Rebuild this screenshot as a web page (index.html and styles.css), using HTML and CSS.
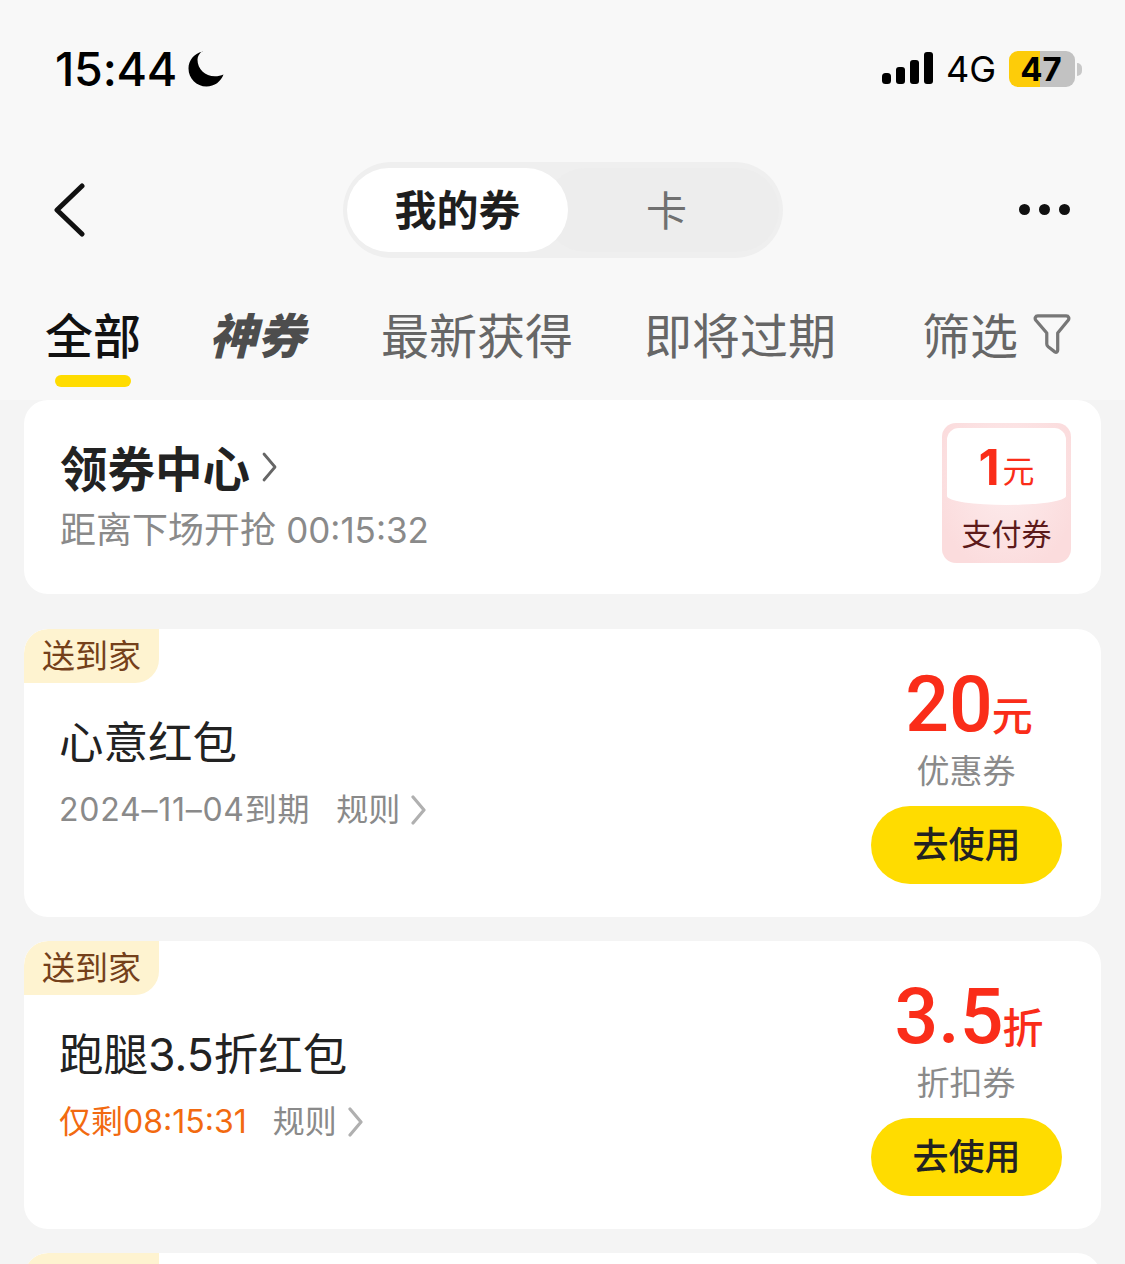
FILE: index.html
```html
<!DOCTYPE html>
<html lang="zh-CN">
<head>
<meta charset="utf-8">
<title>我的券</title>
<link rel="stylesheet" href="styles.css">
</head>
<body>
<div class="page">
  <header class="top">
    <div class="status">
      <div class="status-left">
        <span class="clock">15:44</span>
        <svg class="moon" viewBox="0 0 36 36"><path fill="#000" d="M14.500 0.500C5.800 2.500 0.500 9.500 0.500 17.500c0 10 8 18 18 18 8 0 14.500-5 17-12-2.500 1.200-5.500 1.800-8.500 1.800-10 0-17.500-7.500-17.500-16.500 0-3 1.500-6.300 5-8.800z"/></svg>
      </div>
      <div class="status-right">
        <svg class="signal" viewBox="0 0 52 32"><g fill="#000"><rect x="0" y="21" width="9" height="11" rx="3.500"/><rect x="14" y="15" width="9" height="17" rx="3"/><rect x="28" y="8" width="9" height="24" rx="3"/><rect x="42" y="0" width="9" height="32" rx="3"/></g></svg>
        <span class="net">4G</span>
        <div class="battery"><span class="battery-num">47</span></div>
        <span class="battery-cap"></span>
      </div>
    </div>
    <nav class="nav">
      <svg class="back" viewBox="0 0 32 54"><path d="M28 3 3 27l25 24" fill="none" stroke="#111" stroke-width="5" stroke-linecap="round" stroke-linejoin="round"/></svg>
      <div class="switch">
        <span class="switch-on">我的券</span>
        <span class="switch-off">卡</span>
      </div>
      <div class="more"><i></i><i></i><i></i></div>
    </nav>
    <div class="tabs">
      <div class="tab tab-all">全部<span class="underline"></span></div>
      <div class="tab tab-god">神券</div>
      <div class="tab tab-new">最新获得</div>
      <div class="tab tab-exp">即将过期</div>
      <div class="tab tab-filter">筛选
        <svg class="funnel" viewBox="0 0 40 42"><path d="M5 2h30c2.500 0 3.500 2.500 2 4.500L26 20v18c0 2-1.500 2.800-3 1.800l-7-5.300c-1-.8-1.500-1.500-1.500-3V20L3 6.500C1.500 4.500 2.500 2 5 2z" fill="none" stroke="#777" stroke-width="3.400" stroke-linejoin="round"/></svg>
      </div>
    </div>
  </header>

  <main class="list">
    <section class="center-card">
      <div class="center-text">
        <div class="center-title">领券中心
          <svg class="center-arrow" viewBox="0 0 16 30"><path d="M2 2l11 13L2 28" fill="none" stroke="#666" stroke-width="2.800" stroke-linecap="round" stroke-linejoin="round"/></svg>
        </div>
        <div class="center-sub">距离下场开抢 <span class="center-time">00:15:32</span></div>
      </div>
      <div class="pay">
        <div class="pay-top"><b>1</b><span>元</span></div>
        <div class="pay-label">支付券</div>
      </div>
    </section>

    <section class="coupon coupon-first">
      <span class="badge">送到家</span>
      <div class="coupon-left">
        <div class="coupon-name">心意红包</div>
        <div class="coupon-meta">
          <span class="meta-date">2024–11–04到期</span>
          <span class="meta-rule">规则</span>
          <svg class="rule-arrow" viewBox="0 0 16 30"><path d="M2 2l11 13L2 28" fill="none" stroke="#b0b0b0" stroke-width="3.200" stroke-linecap="round" stroke-linejoin="round"/></svg>
        </div>
      </div>
      <div class="coupon-right">
        <div class="amount"><b>20</b><span>元</span></div>
        <div class="kind">优惠券</div>
        <div class="use">去使用</div>
      </div>
    </section>

    <section class="coupon">
      <span class="badge">送到家</span>
      <div class="coupon-left">
        <div class="coupon-name">跑腿3.5折红包</div>
        <div class="coupon-meta">
          <span class="meta-left">仅剩08:15:31</span>
          <span class="meta-rule">规则</span>
          <svg class="rule-arrow" viewBox="0 0 16 30"><path d="M2 2l11 13L2 28" fill="none" stroke="#b0b0b0" stroke-width="3.200" stroke-linecap="round" stroke-linejoin="round"/></svg>
        </div>
      </div>
      <div class="coupon-right">
        <div class="amount"><b>3.5</b><span>折</span></div>
        <div class="kind">折扣券</div>
        <div class="use">去使用</div>
      </div>
    </section>

    <section class="coupon">
      <span class="badge"></span>
    </section>
  </main>
</div>
</body>
</html>
```
FILE: styles.css
```css
* { box-sizing: border-box; }
html, body { margin: 0; padding: 0; height: 1264px; overflow: hidden; }
body {
  font-family: Inter, "Noto Sans CJK SC", sans-serif;
  background: #f4f4f4;
  color: #222;
}
.page { width: 1125px; height: 1264px; overflow: hidden; }

.top { height: 400px; background: #f8f8f8; }

.status {
  height: 140px;
  padding: 43px 43px 0 55px;
  display: flex;
  justify-content: space-between;
  align-items: flex-start;
}
.status-left { display: flex; align-items: center; height: 52px; gap: 11px; }
.clock { font: 500 46.500px/52px Inter, "Liberation Sans", sans-serif; color: #000; letter-spacing: -.2px; }
.moon { width: 36px; height: 36px; }
.status-right { display: flex; align-items: center; height: 52px; }
.signal { width: 52px; height: 32px; margin-bottom: 2px; }
.net { font: 400 36px/52px Inter, "Liberation Sans", sans-serif; color: #000; margin-left: 12px; width: 52px; }
.battery {
  width: 66px; height: 36px; margin-left: 11px; border-radius: 9px;
  background: linear-gradient(90deg, #fdcc09 0 31px, #c2c2c2 31px);
  text-align: center;
}
.battery-num { font: 700 33px/36px Inter, "Liberation Sans", sans-serif; color: #000; display: block; margin-left: -2px; }
.battery-cap { width: 5px; height: 13px; background: #c8c8c8; border-radius: 0 5px 5px 0; margin-left: 2px; }

.nav {
  height: 118px;
  margin-top: 11px;
  padding: 0 55px 0 54px;
  display: flex;
  align-items: center;
}
.back { width: 32px; height: 54px; }
.switch {
  width: 440px; height: 96px; margin-left: 257px;
  background: #efefef; border-radius: 48px;
  display: flex; align-items: center; padding: 0 4px;
}
.switch-on {
  position: relative; z-index: 1;
  width: 221px; height: 84px; border-radius: 42px; background: #fff;
  font: 700 42px/80px "Noto Sans CJK SC", sans-serif; color: #1e1e1e; text-align: center;
}
.switch-off {
  width: 235px; height: 84px; margin-left: -24px; padding-left: 10px;
  border-radius: 42px; background: #ededed; text-align: center;
  font: 400 41px/80px "Noto Sans CJK SC", sans-serif; color: #707070;
}
.more { margin-left: auto; display: flex; gap: 9px; margin-bottom: 2px; }
.more i { width: 11px; height: 11px; background: #111; border-radius: 50%; display: block; }

.tabs { display: flex; align-items: flex-start; padding: 30px 0 0 45px; height: 120px; }
.tab {
  position: relative;
  font: 400 48px/68px "Noto Sans CJK SC", sans-serif;
  color: #666;
  white-space: nowrap;
}
.tab-all { color: #111; font-weight: 500; width: 96px; }
.underline {
  position: absolute; left: 10px; top: 76px; width: 76px; height: 12px;
  background: #ffdc00; border-radius: 6px;
}
.tab-god {
  margin-left: 68px; width: 96px; font-weight: 900; font-style: italic; color: #4d4d4d;
}
.tab-new { margin-left: 76px; width: 192px; }
.tab-exp { margin-left: 71px; width: 192px; }
.tab-filter { margin-left: 86px; display: flex; align-items: center; gap: 15px; }
.funnel { width: 38px; height: 42px; margin-top: 2px; }

.list { padding: 0 24px; display: flex; flex-direction: column; }
.center-card {
  height: 194px; background: #fff; border-radius: 24px;
  display: flex; justify-content: space-between;
  padding: 23px 30px 0 36px;
}
.center-text { padding-top: 12px; }
.center-title {
  font: 700 47.500px/64px "Noto Sans CJK SC", sans-serif; color: #222;
  display: flex; align-items: center; gap: 12px;
}
.center-arrow { width: 16px; height: 30px; }
.center-sub {
  font: 400 36px/48px Inter, "Noto Sans CJK SC", sans-serif; color: #8a8a8a; margin-top: 7px;
}
.center-time { font-size: 35px; }
.pay {
  width: 129px; height: 140px; border-radius: 14px; overflow: hidden;
  background: radial-gradient(ellipse at 50% 40%, #fdeced, #fbdcdd 80%);
  padding: 5px 5px 0;
}
.pay-top {
  height: 77px; background: #fff; border-radius: 12px 12px 60px 60px / 12px 12px 9px 9px;
  text-align: center; color: #fa2d19;
  padding-top: 7px;
}
.pay-top b { font: 700 49px/66px Inter, "Liberation Sans", sans-serif; }
.pay-top span { font: 400 32px/54px "Noto Sans CJK SC", sans-serif; margin-left: 3px; vertical-align: 2px; }
.pay-label {
  font: 400 30px/42px "Noto Sans CJK SC", sans-serif; color: #5c1a1a; text-align: center; margin-top: 6px;
}

.coupon {
  position: relative; height: 288px; background: #fff; border-radius: 24px;
  margin-top: 24px; display: flex; justify-content: space-between;
  overflow: hidden;
}
.coupon-first { margin-top: 35px; }
.badge {
  position: absolute; left: 0; top: 0; width: 135px; height: 54px;
  background: #fef3d0; border-radius: 24px 0 24px 0;
  font: 400 33px/50px "Noto Sans CJK SC", sans-serif; color: #74401a; text-align: center;
}
.coupon-left { padding: 84px 0 0 35px; }
.coupon-name { font: 400 44.500px/60px Inter, "Noto Sans CJK SC", sans-serif; color: #222; }
.coupon-meta {
  display: flex; align-items: center; margin-top: 15px;
  font: 400 32px/44px Inter, "Noto Sans CJK SC", sans-serif; color: #8a8a8a;
}
.meta-date { letter-spacing: .75px; }
.meta-left { color: #f26a10; }
.meta-rule { margin-left: 26px; }
.rule-arrow { width: 16px; height: 30px; margin-left: 11px; }
.coupon-right { width: 192px; margin-right: 39px; padding-top: 36px; text-align: center; }
.amount { color: #fa2d19; height: 80px; display: flex; justify-content: center; align-items: baseline; padding-left: 6px; white-space: nowrap; }
.amount b { font: 500 77px/80px Roboto, "Liberation Sans", sans-serif; }
.amount span { font: 500 41px/48px "Noto Sans CJK SC", sans-serif; margin-left: -1px; }
.kind { font: 400 33px/44px "Noto Sans CJK SC", sans-serif; color: #8a8a8a; margin-top: 2px; }
.use {
  width: 191px; height: 78px; margin: 15px 0 0 1px; border-radius: 39px; background: #ffdc00;
  font: 500 36px/73px "Noto Sans CJK SC", sans-serif; color: #222; text-align: center;
}
```
